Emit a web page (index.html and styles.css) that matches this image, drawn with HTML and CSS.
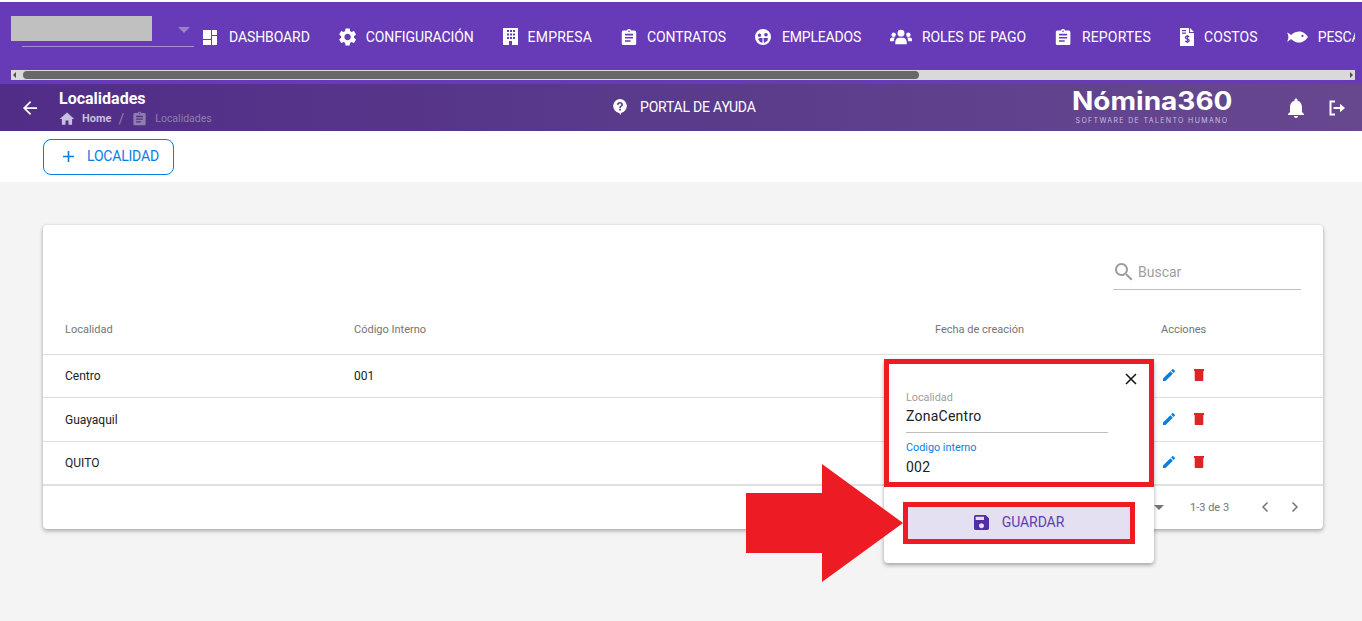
FILE: index.html
```html
<!DOCTYPE html>
<html lang="en">
<head>
    <meta charset="UTF-8">
    <title>Localidades</title>
    <link rel="stylesheet" href="styles.css">
</head>
<body>
    <nav class="topnav">
        <div class="nav-row">
            <div class="company">
                <div class="company-mask"></div>
                <span class="company-caret"></span>
            </div>
            <ul class="nav-items">
                <li class="nav-item">
                    <svg width="16" height="18" viewBox="0 0 16 18" preserveAspectRatio="xMinYMid meet"><path d="M0 2h8v9H0zM9 2h5v5H9zM9 8h5v9H9zM0 12h8v5H0z"/></svg>
                    DASHBOARD
                </li>
                <li class="nav-item">
                    <svg width="17" height="18" viewBox="2.400 2.500 19 19" preserveAspectRatio="xMinYMid meet"><path d="M19.14 12.94c.04-.3.06-.61.06-.94 0-.32-.02-.64-.07-.94l2.03-1.58c.18-.14.23-.41.12-.61l-1.92-3.32c-.12-.22-.37-.29-.59-.22l-2.39.96c-.5-.38-1.03-.7-1.62-.94l-.36-2.54c-.04-.24-.24-.41-.48-.41h-3.84c-.24 0-.43.17-.47.41l-.36 2.54c-.59.24-1.13.57-1.62.94l-2.39-.96c-.22-.08-.47 0-.59.22L2.74 8.87c-.12.21-.08.47.12.61l2.03 1.58c-.05.3-.09.63-.09.94s.02.64.07.94l-2.03 1.58c-.18.14-.23.41-.12.61l1.92 3.32c.12.22.37.29.59.22l2.39-.96c.5.38 1.03.7 1.62.94l.36 2.54c.05.24.24.41.48.41h3.84c.24 0 .44-.17.47-.41l.36-2.54c.59-.24 1.13-.56 1.62-.94l2.39.96c.22.08.47 0 .59-.22l1.92-3.32c.12-.22.07-.47-.12-.61l-2.01-1.58zM12 15.6c-1.98 0-3.6-1.62-3.6-3.6s1.62-3.6 3.6-3.6 3.6 1.62 3.6 3.6-1.62 3.6-3.6 3.6z"/></svg>
                    CONFIGURACIÓN
                </li>
                <li class="nav-item nav-item-empresa">
                    <svg width="15" height="18" viewBox="0 0 15 18" preserveAspectRatio="xMinYMid meet"><path fill-rule="evenodd" d="M0 0h15v17H0zM4 2v2h2V2zM7 2v2h2V2zM10 2v2h2V2zM4 5.500v2h2v-2zM7 5.500v2h2v-2zM10 5.500v2h2v-2zM4 9v2h2V9zM7 9v2h2V9zM10 9v2h2V9zM6 13v4h3v-4z"/></svg>
                    EMPRESA
                </li>
                <li class="nav-item">
                    <svg width="16" height="18" viewBox="2 0 20 22" preserveAspectRatio="xMinYMid meet"><path d="M19 3h-4.180C14.400 1.840 13.300 1 12 1c-1.300 0-2.400.84-2.820 2H5c-1.100 0-2 .9-2 2v14c0 1.100.9 2 2 2h14c1.100 0 2-.9 2-2V5c0-1.100-.9-2-2-2zm-7 0c.55 0 1 .45 1 1s-.45 1-1 1-1-.45-1-1 .45-1 1-1zm2 14H7v-2h7v2zm3-4H7v-2h10v2zm0-4H7V7h10v2z"/></svg>
                    CONTRATOS
                </li>
                <li class="nav-item nav-item-empleados">
                    <svg width="17" height="18" viewBox="0 0 17 18" preserveAspectRatio="xMinYMid meet"><path fill-rule="evenodd" d="M8 1a8 8 0 1 0 0 16A8 8 0 0 0 8 1zM4.500 5.500a1.700 1.700 0 1 1 0 3.400 1.700 1.700 0 0 1 0-3.400zM11 5a1.800 1.800 0 1 1 0 3.600A1.800 1.800 0 0 1 11 5zM5 10h2.500v4.800A6 6 0 0 1 3 11zM8.500 10H13l-.6 2.800L9 15z"/></svg>
                    EMPLEADOS
                </li>
                <li class="nav-item nav-item-roles">
                    <svg width="22" height="18" viewBox="0 0 23 18" preserveAspectRatio="xMinYMid meet"><circle cx="11.500" cy="5" r="3.600"/><circle cx="3.800" cy="6.600" r="2.300"/><circle cx="19.200" cy="6.600" r="2.300"/><path d="M5.500 16.500v-2.200c0-2.600 2-4.500 3.800-4.500h4.400c1.800 0 3.800 1.900 3.800 4.500v2.200zM0 13.500v-1.600C0 10.300 1 9.500 2.400 9.500h2.800c-.9 1-1.200 2.300-1.200 4zM23 13.500v-1.600c0-1.600-1-2.400-2.400-2.400h-2.800c.9 1 1.200 2.300 1.200 4z"/></svg>
                    ROLES DE PAGO
                </li>
                <li class="nav-item nav-item-reportes">
                    <svg width="17" height="18" viewBox="2 0 21 22" preserveAspectRatio="xMinYMid meet"><path d="M19 3h-4.180C14.400 1.840 13.300 1 12 1c-1.300 0-2.400.84-2.820 2H5c-1.100 0-2 .9-2 2v14c0 1.100.9 2 2 2h14c1.100 0 2-.9 2-2V5c0-1.100-.9-2-2-2zm-7 0c.55 0 1 .45 1 1s-.45 1-1 1-1-.45-1-1 .45-1 1-1zm2 14H7v-2h7v2zm3-4H7v-2h10v2zm0-4H7V7h10v2z"/></svg>
                    REPORTES
                </li>
                <li class="nav-item nav-item-costos">
                    <svg width="14" height="20" viewBox="0 0 14 20" preserveAspectRatio="xMinYMid meet"><path fill-rule="evenodd" d="M0 1h9v5h5v13H0zM10 1l4 4h-4zM2 3v1.200h4V3zM2 5.500v1.200h4V5.500z"/><path d="M9.200 10.200c-.4-.7-1.100-1-1.900-1-1 0-1.900.5-1.900 1.400 0 2 3.900 1 3.900 3 0 .9-.9 1.400-1.900 1.400-.9 0-1.600-.4-2-1.100M7.300 8v8" fill="none" stroke="#673ab7" stroke-width="1.200"/></svg>
                    COSTOS
                </li>
                <li class="nav-item">
                    <svg width="21" height="18" viewBox="0 0 21 18" preserveAspectRatio="xMinYMid meet"><path fill-rule="evenodd" d="M0 4.500c1.500.4 2.800 1.400 4 2.600C6.500 4.600 9.500 3.500 12.500 3.500c3.600 0 6.600 2.600 8.500 5.500-1.900 2.900-4.900 5.500-8.500 5.500-3 0-6-1.100-8.500-3.600-1.200 1.200-2.500 2.200-4 2.600 1-1.500 1.400-3 1.400-4.500S1 6 0 4.500zM15.500 6.800a1.100 1.100 0 1 0 0 2.200 1.100 1.100 0 0 0 0-2.200z"/></svg>
                    PESCA
                </li>
            </ul>
        </div>
        <div class="nav-scroll">
            <span class="scroll-arrow scroll-arrow-left"></span>
            <div class="scroll-thumb"></div>
            <span class="scroll-arrow scroll-arrow-right"></span>
        </div>
    </nav>

    <header class="page-header">
        <svg class="back-icon" width="14" height="14" viewBox="4 4 16 16"><path d="M20 11H7.830l5.590-5.590L12 4l-8 8 8 8 1.410-1.410L7.830 13H20v-2z"/></svg>
        <div class="page-title">
            <div class="title-text">Localidades</div>
            <div class="crumbs">
                <svg width="16" height="14" viewBox="1 3 22 18"><path d="M10 20v-6h4v6h5v-8h3L12 3 2 12h3v8z"/></svg>
                <span class="crumb-home">Home</span>
                <span class="crumb-sep">/</span>
                <svg class="crumb-doc" width="15" height="15" viewBox="2 0 20 22"><path d="M19 3h-4.180C14.400 1.840 13.300 1 12 1c-1.300 0-2.400.84-2.820 2H5c-1.100 0-2 .9-2 2v14c0 1.100.9 2 2 2h14c1.100 0 2-.9 2-2V5c0-1.100-.9-2-2-2zm-7 0c.55 0 1 .45 1 1s-.45 1-1 1-1-.45-1-1 .45-1 1-1zm2 14H7v-2h7v2zm3-4H7v-2h10v2zm0-4H7V7h10v2z"/></svg>
                <span class="crumb-current">Localidades</span>
            </div>
        </div>
        <div class="help-link">
            <svg width="14" height="16" viewBox="0 0 14 16"><path fill-rule="evenodd" d="M7 0a7 7 0 0 0-1 13.900L8 16v-2.100A7 7 0 0 0 7 0zM7 3c1.700 0 3 1 3 2.500 0 1.100-.6 1.600-1.300 2.100-.6.400-.9.700-.9 1.400H6.200c0-1.200.4-1.800 1.200-2.300.6-.4.900-.7.900-1.200 0-.6-.5-1-1.200-1-.8 0-1.300.5-1.400 1.200H3.900C4 4.100 5.200 3 7 3zM6.200 9.800h1.700v1.600H6.200z"/></svg>
            PORTAL DE AYUDA
        </div>
        <div class="logo">
            <div class="logo-name">Nómina360</div>
            <div class="logo-sub">SOFTWARE DE TALENTO HUMANO</div>
        </div>
        <svg class="bell-icon" width="18" height="20" viewBox="3.500 2 17 20"><path d="M12 22c1.100 0 2-.9 2-2h-4c0 1.100.9 2 2 2zm6-6v-5c0-3.070-1.630-5.640-4.500-6.320V4c0-.83-.67-1.500-1.500-1.500s-1.500.67-1.500 1.500v.68C7.640 5.360 6 7.920 6 11v5l-2 2v1h16v-1l-2-2z"/></svg>
        <svg class="exit-icon" width="16" height="16" viewBox="0 0 16 16"><path d="M6 1.500H1.500v13H6" fill="none" stroke="#fff" stroke-width="2"/><path d="M4.500 7h6.500V3.800L16 8l-5 4.200V9H4.500z"/></svg>
    </header>

    <div class="toolbar">
        <button class="add-btn">
            <svg width="11" height="11" viewBox="0 0 11 11"><path d="M4.700 0h1.600v4.700H11v1.600H6.300V11H4.700V6.300H0V4.700h4.700z"/></svg>
            LOCALIDAD
        </button>
    </div>

    <main class="content">
        <section class="card">
            <div class="search-row">
                <div class="search-box">
                    <svg width="18" height="18" viewBox="3 3 18 18"><path d="M15.500 14h-.79l-.28-.27C15.410 12.590 16 11.110 16 9.500 16 5.910 13.090 3 9.500 3S3 5.910 3 9.500 5.910 16 9.500 16c1.610 0 3.090-.59 4.230-1.570l.27.28v.79l5 4.990L20.490 19l-4.990-5zm-6 0C7.010 14 5 11.990 5 9.500S7.010 5 9.500 5 14 7.010 14 9.500 11.990 14 9.500 14z"/></svg>
                    <span>Buscar</span>
                </div>
            </div>

            <div class="row row-head">
                <div>Localidad</div>
                <div>Código Interno</div>
                <div>Fecha de creación</div>
                <div>Acciones</div>
            </div>
            <div class="row row-first">
                <div>Centro</div>
                <div>001</div>
                <div></div>
                <div class="actions">
                    <svg class="edit-icon" width="12" height="12" viewBox="3 3 18 18"><path d="M3 17.250V21h3.750L17.810 9.940l-3.750-3.750L3 17.250zM20.710 7.040c.39-.39.39-1.020 0-1.410l-2.340-2.340c-.39-.39-1.020-.39-1.410 0l-1.830 1.830 3.750 3.750 1.830-1.830z"/></svg>
                    <svg class="trash-icon" width="10" height="12" viewBox="0 0 10 12"><path d="M0 0h3l.5-.5h3L7 0h3v2H9.300v9.200c0 .5-.3.800-.8.800h-7c-.5 0-.8-.3-.8-.8V2H0z"/></svg>
                </div>
            </div>
            <div class="row">
                <div>Guayaquil</div>
                <div></div>
                <div></div>
                <div class="actions">
                    <svg class="edit-icon" width="12" height="12" viewBox="3 3 18 18"><path d="M3 17.250V21h3.750L17.810 9.940l-3.750-3.750L3 17.250zM20.710 7.040c.39-.39.39-1.020 0-1.410l-2.340-2.340c-.39-.39-1.020-.39-1.410 0l-1.830 1.830 3.750 3.750 1.830-1.830z"/></svg>
                    <svg class="trash-icon" width="10" height="12" viewBox="0 0 10 12"><path d="M0 0h3l.5-.5h3L7 0h3v2H9.300v9.200c0 .5-.3.800-.8.800h-7c-.5 0-.8-.3-.8-.8V2H0z"/></svg>
                </div>
            </div>
            <div class="row row-last">
                <div>QUITO</div>
                <div></div>
                <div></div>
                <div class="actions">
                    <svg class="edit-icon" width="12" height="12" viewBox="3 3 18 18"><path d="M3 17.250V21h3.750L17.810 9.940l-3.750-3.750L3 17.250zM20.710 7.040c.39-.39.39-1.020 0-1.410l-2.340-2.340c-.39-.39-1.020-.39-1.410 0l-1.830 1.830 3.750 3.750 1.830-1.830z"/></svg>
                    <svg class="trash-icon" width="10" height="12" viewBox="0 0 10 12"><path d="M0 0h3l.5-.5h3L7 0h3v2H9.300v9.200c0 .5-.3.800-.8.800h-7c-.5 0-.8-.3-.8-.8V2H0z"/></svg>
                </div>
            </div>

            <div class="pager">
                <span class="pager-caret"></span>
                <span class="pager-count">1-3 de 3</span>
                <svg width="8" height="12" viewBox="0 0 8 12"><path d="M6.500 1.500 2 6l4.500 4.500" fill="none" stroke="#757575" stroke-width="1.500"/></svg>
                <svg width="8" height="12" viewBox="0 0 8 12"><path d="M1.500 1.500 6 6l-4.500 4.500" fill="none" stroke="#757575" stroke-width="1.500"/></svg>
            </div>
        </section>
    </main>

    <!-- popup abierto sobre la tabla -->
    <div class="popup">
        <div class="popup-form">
            <svg class="popup-close" width="12" height="12" viewBox="0 0 12 12"><path d="M1 1l10 10M11 1 1 11" fill="none" stroke="#111" stroke-width="1.500"/></svg>
            <label class="field-label">Localidad</label>
            <div class="field-value field-line">ZonaCentro</div>
            <label class="field-label field-label-active">Codigo interno</label>
            <div class="field-value">002</div>
        </div>
        <div class="popup-action">
            <button class="save-btn">
                <svg width="15" height="15" viewBox="3 3 18 18"><path d="M17 3H5c-1.110 0-2 .9-2 2v14c0 1.100.89 2 2 2h14c1.100 0 2-.9 2-2V7l-4-4zm-5 16c-1.660 0-3-1.340-3-3s1.340-3 3-3 3 1.340 3 3-1.340 3-3 3zm3-10H5V5h10v4z"/></svg>
                GUARDAR
            </button>
        </div>
    </div>

    <!-- flecha roja de la captura -->
    <svg class="callout-arrow" width="158" height="120" viewBox="746 463 158 120"><polygon points="746,493 822,493 822,464 903,523 822,582 822,553 746,553"/></svg>
</body>
</html>
```

FILE: styles.css
```css
* {
    box-sizing: border-box;
}
body {
    font-family: Roboto, 'Liberation Sans', sans-serif;
    background-color: #f4f4f4;
    margin: 0;
    height: 621px;
    position: relative;
    overflow: hidden;
}
ul {
    list-style: none;
    margin: 0;
    padding: 0;
}

/* top menu */
.topnav {
    background-color: #673ab7;
    border-top: 2px solid white;
    height: 84px;
    padding-left: 11px;
    color: white;
}
.nav-row {
    display: flex;
    width: 1344px;
    height: 68px;
    overflow: hidden;
}
.company {
    position: relative;
    flex: none;
    width: 172px;
    height: 45px;
    margin-left: 11px;
    margin-right: 9px;
    border-bottom: 1px solid #a78fd0;
}
.company-mask {
    position: absolute;
    left: -11px;
    top: 14px;
    width: 141px;
    height: 25px;
    background-color: #c0c0c0;
}
.company-caret {
    position: absolute;
    left: 156px;
    top: 25px;
    border-left: 6px solid transparent;
    border-right: 6px solid transparent;
    border-top: 6px solid #9a82c9;
}
.nav-items {
    display: flex;
    gap: 29px;
    align-items: center;
    height: 70px;
    flex: none;
}
.nav-item {
    display: flex;
    align-items: center;
    gap: 10px;
    font-size: 14px;
    white-space: nowrap;
    letter-spacing: -0.1px;
}
.nav-item svg {
    fill: white;
    flex: none;
}
/* hinted widths in the menu differ a little per word */
.nav-item-empresa {
    letter-spacing: 0.2px;
}
.nav-item-empleados {
    letter-spacing: -0.2px;
}
.nav-item-roles {
    word-spacing: 1.5px;
}
.nav-item-reportes {
    letter-spacing: 0.15px;
}
.nav-item-costos {
    letter-spacing: 0.1px;
}
.nav-scroll {
    display: flex;
    align-items: center;
    height: 10px;
    width: 1344px;
    background-color: #d9d9d9;
    padding: 0 2px;
}
.scroll-thumb {
    width: 896px;
    height: 8px;
    margin-left: 7px;
    border-radius: 4px;
    background-color: #686868;
}
.scroll-arrow {
    border-top: 3px solid transparent;
    border-bottom: 3px solid transparent;
}
.scroll-arrow-left {
    border-right: 3px solid #505050;
}
.scroll-arrow-right {
    border-left: 3px solid #505050;
    margin-left: auto;
}

/* purple title bar */
.page-header {
    display: flex;
    align-items: center;
    height: 47px;
    padding-left: 23px;
    color: white;
    background: linear-gradient(90deg, #512d87 0%, #5a3b8b 50%, #67488f 100%);
}
.back-icon {
    fill: white;
    flex: none;
    margin-right: 22px;
}
.page-title {
    width: 554px;
    flex: none;
    padding-top: 2px;
}
.title-text {
    font-size: 16px;
    font-weight: 700;
    line-height: 18px;
    margin-top: -1px;
}
.crumbs {
    display: flex;
    align-items: center;
    font-size: 11px;
    height: 15px;
    margin-top: 3px;
    color: #c9bfe0;
}
.crumbs svg {
    fill: #c9bfe0;
    flex: none;
}
.crumbs .crumb-doc {
    fill: #8f7fae;
    margin-left: 8px;
}
.crumb-home {
    font-weight: 700;
    margin-left: 7px;
}
.crumb-sep {
    color: #8f7fae;
    margin-left: 7px;
    font-size: 14px;
}
.crumb-current {
    color: #8f7fae;
    margin-left: 8px;
    font-size: 10.500px;
}
.help-link {
    display: flex;
    align-items: center;
    gap: 13px;
    width: 459px;
    height: 20px;
    margin-bottom: 2px;
    flex: none;
    font-size: 14px;
    letter-spacing: -0.2px;
}
.help-link svg {
    fill: white;
}
.logo {
    width: 160px;
    flex: none;
    margin-top: -2px;
}
.logo-name {
    font-family: Inter, 'Noto Sans', sans-serif;
    font-weight: 700;
    font-size: 25px;
    line-height: 26px;
    white-space: nowrap;
    transform: scaleX(1.12);
    transform-origin: left center;
}
.logo-sub {
    font-family: Inter, 'Noto Sans', sans-serif;
    font-size: 7px;
    line-height: 8px;
    margin-top: 3px;
    letter-spacing: 1.350px;
    color: #c9bfe0;
    text-align: center;
    white-space: nowrap;
}
.bell-icon {
    fill: white;
    flex: none;
    margin-left: 55px;
}
.exit-icon {
    fill: white;
    flex: none;
    margin-left: 24px;
}

/* add button strip */
.toolbar {
    background-color: white;
    height: 51px;
    padding: 8px 0 0 43px;
}
.add-btn {
    display: flex;
    align-items: center;
    gap: 13px;
    width: 131px;
    height: 36px;
    padding: 0 0 2px 19px;
    background: white;
    border: 1px solid #0a7ee0;
    border-radius: 8px;
    color: #0a7ee0;
    font-family: inherit;
    font-size: 14px;
    letter-spacing: -0.2px;
}
.add-btn svg {
    fill: #0a7ee0;
}

/* table card */
.content {
    padding: 43px 0 0 43px;
}
.card {
    width: 1280px;
    height: 304px;
    background-color: white;
    border-radius: 4px;
    box-shadow: 0 2px 4px rgba(0, 0, 0, 0.3), 0 0 2px rgba(0, 0, 0, 0.1);
}
.search-row {
    display: flex;
    justify-content: flex-end;
    height: 82px;
    padding: 33px 22px 0 0;
}
.search-box {
    display: flex;
    align-items: center;
    gap: 5px;
    width: 188px;
    height: 32px;
    padding: 0 0 4px 2px;
    border-bottom: 1px solid #bdbdbd;
    color: #9e9e9e;
    font-size: 14px;
}
.search-box svg {
    fill: #9e9e9e;
}
.row {
    display: grid;
    grid-template-columns: 289px 581px 226px 1fr;
    align-items: center;
    height: 44px;
    padding-left: 22px;
    border-bottom: 1px solid #e0e0e0;
    font-size: 12px;
    color: #212121;
}
.row-head {
    height: 48px;
    padding-bottom: 3px;
    color: #757575;
    font-size: 11px;
}
.row-first {
    height: 43px;
}
.row-last {
    border-bottom-width: 2px;
}
.actions {
    display: flex;
    align-items: center;
    gap: 19px;
    padding-left: 2px;
    margin-top: -2px;
}
.edit-icon {
    fill: #0a7ee0;
}
.trash-icon {
    fill: #dc2626;
}
.pager {
    display: flex;
    align-items: center;
    height: 44px;
    padding: 0 0 2px 1111px;
    font-size: 11px;
    color: #757575;
}
.pager-caret {
    border-left: 5px solid transparent;
    border-right: 5px solid transparent;
    border-top: 5px solid #757575;
}
.pager-count {
    margin-left: 26px;
    margin-right: 32px;
}
.pager svg + svg {
    margin-left: 22px;
}

/* popup over the table */
.popup {
    position: absolute;
    left: 884px;
    top: 359px;
    width: 270px;
    height: 204px;
    background-color: white;
    border-radius: 4px;
    box-shadow: 0 2px 4px rgba(0, 0, 0, 0.35);
}
.popup-form {
    position: relative;
    height: 128px;
    padding: 27px 0 0 17px;
    border: 5px solid #ed1c24;
}
.popup-close {
    position: absolute;
    right: 12px;
    top: 9px;
}
.field-label {
    display: block;
    font-size: 10.800px;
    line-height: 13px;
    color: #9e9e9e;
}
.field-label-active {
    color: #0a7ee0;
}
.field-value {
    font-size: 14px;
    line-height: 20px;
    margin-top: 3px;
    color: #212121;
    letter-spacing: 0.25px;
}
.field-line {
    width: 202px;
    height: 27px;
    margin-top: 2px;
    margin-bottom: 8px;
    border-bottom: 1px solid #bdbdbd;
}
.popup-action {
    padding: 15px 0 0 19px;
}
.save-btn {
    display: flex;
    align-items: center;
    justify-content: center;
    gap: 13px;
    width: 232px;
    height: 42px;
    padding: 0 0 2px;
    background-color: #e5e0f1;
    border: 5px solid #ed1c24;
    color: #5b3fb0;
    font-family: inherit;
    font-size: 14px;
    letter-spacing: -0.1px;
}
.save-btn svg {
    fill: #512da8;
}
.callout-arrow {
    position: absolute;
    left: 746px;
    top: 463px;
    fill: #ed1c24;
}
```
